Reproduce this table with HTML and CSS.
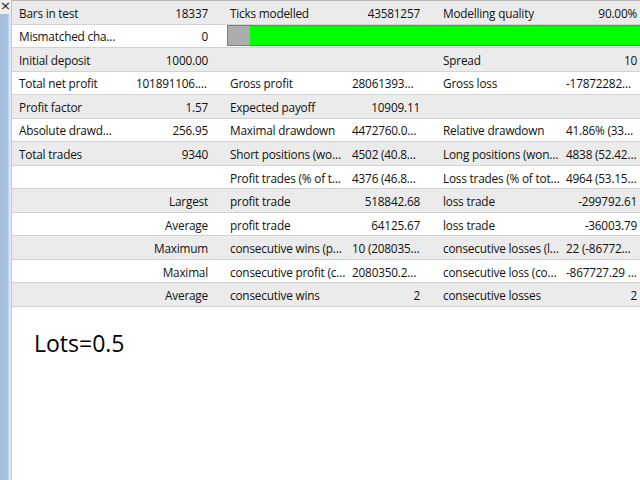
FILE: index.html
```html
<!DOCTYPE html>
<html>
<head>
<meta charset="utf-8">
<link rel="stylesheet" href="styles.css">
</head>
<body>
<div class="page">
  <aside class="side">
    <div class="close">×</div>
    <div class="blue"></div>
  </aside>
  <main class="main">
    <div class="table">
      <div class="row gray">
        <div class="lab">Bars in test</div><div class="val">18337</div>
        <div class="lab l2">Ticks modelled</div><div class="val v2">43581257</div>
        <div class="lab l3">Modelling quality</div><div class="val v3">90.00%</div>
      </div>
      <div class="row white">
        <div class="lab">Mismatched chart errors</div><div class="val">0</div>
        <div class="bar"><div class="bar-gray"></div><div class="bar-green"></div></div>
      </div>
      <div class="row gray">
        <div class="lab">Initial deposit</div><div class="val">1000.00</div>
        <div class="lab l2"></div><div class="val v2"></div>
        <div class="lab l3">Spread</div><div class="val v3">10</div>
      </div>
      <div class="row white">
        <div class="lab">Total net profit</div><div class="val">101891106.45</div>
        <div class="lab l2">Gross profit</div><div class="val v2">280613932.10</div>
        <div class="lab l3">Gross loss</div><div class="val v3">-178722825.65</div>
      </div>
      <div class="row gray">
        <div class="lab">Profit factor</div><div class="val">1.57</div>
        <div class="lab l2">Expected payoff</div><div class="val v2">10909.11</div>
        <div class="lab l3"></div><div class="val v3"></div>
      </div>
      <div class="row white">
        <div class="lab">Absolute drawdown</div><div class="val">256.95</div>
        <div class="lab l2">Maximal drawdown</div><div class="val v2">4472760.05 (33.85%)</div>
        <div class="lab l3">Relative drawdown</div><div class="val v3">41.86% (33370.12)</div>
      </div>
      <div class="row gray">
        <div class="lab">Total trades</div><div class="val">9340</div>
        <div class="lab l2">Short positions (won %)</div><div class="val v2">4502 (40.84%)</div>
        <div class="lab l3">Long positions (won %)</div><div class="val v3">4838 (52.42%)</div>
      </div>
      <div class="row white">
        <div class="lab"></div><div class="val"></div>
        <div class="lab l2">Profit trades (% of total)</div><div class="val v2">4376 (46.85%)</div>
        <div class="lab l3">Loss trades (% of total)</div><div class="val v3">4964 (53.15%)</div>
      </div>
      <div class="row gray">
        <div class="lab"></div><div class="val">Largest</div>
        <div class="lab l2">profit trade</div><div class="val v2">518842.68</div>
        <div class="lab l3">loss trade</div><div class="val v3">-299792.61</div>
      </div>
      <div class="row white">
        <div class="lab"></div><div class="val">Average</div>
        <div class="lab l2">profit trade</div><div class="val v2">64125.67</div>
        <div class="lab l3">loss trade</div><div class="val v3">-36003.79</div>
      </div>
      <div class="row gray">
        <div class="lab"></div><div class="val">Maximum</div>
        <div class="lab l2">consecutive wins (profit in money)</div><div class="val v2">10 (2080350.20)</div>
        <div class="lab l3">consecutive losses (loss in money)</div><div class="val v3">22 (-867727.29)</div>
      </div>
      <div class="row white">
        <div class="lab"></div><div class="val">Maximal</div>
        <div class="lab l2">consecutive profit (count of wins)</div><div class="val v2">2080350.20 (10)</div>
        <div class="lab l3">consecutive loss (count of losses)</div><div class="val v3">-867727.29 (22)</div>
      </div>
      <div class="row gray">
        <div class="lab"></div><div class="val">Average</div>
        <div class="lab l2">consecutive wins</div><div class="val v2">2</div>
        <div class="lab l3">consecutive losses</div><div class="val v3">2</div>
      </div>
    </div>
    <div class="note">Lots=0.5</div>
  </main>
</div>
</body>
</html>
```

FILE: styles.css
```css
* { box-sizing: border-box; }
html, body { margin: 0; padding: 0; }
body {
  width: 640px;
  height: 480px;
  overflow: hidden;
  background: #ffffff;
  font-family: "Open Sans", "Noto Sans", sans-serif;
  font-size: 11.8px;
  letter-spacing: -0.2px;
  color: #111111;
}
.page {
  display: flex;
  height: 480px;
}
.side {
  width: 12px;
  flex: none;
  display: flex;
  flex-direction: column;
  border-right: 1px solid #c4c8cc;
}
.close {
  height: 14px;
  background: #eeeeee;
  font-family: "DejaVu Sans", sans-serif;
  font-size: 13px;
  letter-spacing: 0;
  line-height: 12px;
  color: #222;
  overflow: hidden;
}
.blue {
  flex: 1;
  background: linear-gradient(to right, #a3bddc 0, #a9c3e0 8px, #d6e2ef 9px, #e8eef5 11px);
}
.main {
  flex: 1;
  min-width: 0;
  overflow: hidden;
}
.table {
  width: 640px;
  height: 307px;
  display: grid;
  grid-template-rows: repeat(13, 1fr);
  border-top: 1px solid #b9b9b9;
}
.row {
  display: grid;
  grid-template-columns: 108px 104px 126px 86px 127px 89px;
  align-items: center;
  border-bottom: 1px solid #d2d2d2;
  padding-top: 1px;
  min-height: 0;
}
.gray { background: #ebebeb; }
.white { background: #ffffff; }
.lab, .val {
  white-space: nowrap;
  overflow: hidden;
  text-overflow: ellipsis;
  line-height: 16px;
}
.lab { padding: 0 3px 0 7px; }
.val { padding: 0 16px 0 16px; text-align: right; }
.l2 { padding: 0 4px 0 6px; }
.v2 { padding: 0 16px 0 2px; }
.l3 { padding: 0 3px 0 7px; }
.v3 { padding: 0 15px 0 3px; }
.bar {
  grid-column: 3 / 7;
  margin-left: 3px;
  margin-top: -1px;
  height: 21px;
  border: 1px solid #4a8ac4;
  display: flex;
  align-self: center;
}
.bar-gray { width: 22px; background: #acacac; }
.bar-green { flex: 1; background: #00ff00; }
.note {
  padding: 21px 0 0 22px;
  font-size: 23px;
  letter-spacing: 0;
  line-height: 30px;
  color: #000;
}
```
